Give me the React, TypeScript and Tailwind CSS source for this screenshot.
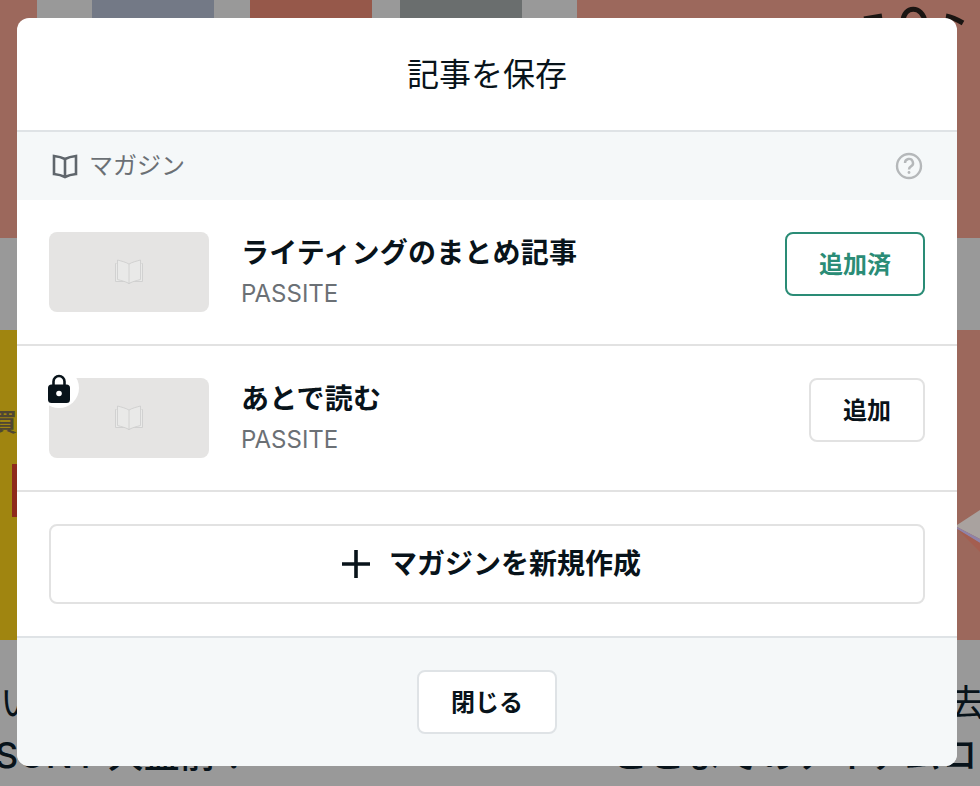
const font = { fontFamily: 'Inter, "Noto Sans CJK JP", sans-serif' }

function BookOutline() {
  return (
    <svg width="30" height="26" viewBox="0 0 30 26" fill="#e9e9e8" stroke="#cbcbcb" strokeWidth="0.8">
      <path d="M2.5 4.5 H1.5 V22.5 H12 L15 24.5 L18 22.5 H28.5 V4.5 H27.5" />
      <path d="M15 5 C11.5 3 7 2 3.5 1 V20.5 C7 21.5 11.5 22.5 15 24.5 C18.5 22.5 23 21.5 26.5 20.5 V1 C23 2 18.5 3 15 5 Z" />
      <path d="M15 5 V24.5" />
    </svg>
  )
}

function Thumb({ locked }: { locked?: boolean }) {
  return (
    <div className="relative w-40 h-20 rounded-lg bg-[#e5e4e3] flex items-center justify-center shrink-0">
      <BookOutline />
      {locked && (
        <div className="absolute -left-2.5 -top-2.5 w-10 h-10 rounded-full bg-white flex items-center justify-center">
          <svg width="22" height="29" viewBox="0 0 22 29">
            <path d="M5.5 12 V7.5 a5.5 5.5 0 0 1 11 0 V12" fill="none" stroke="#08131a" strokeWidth="2.6" />
            <rect x="0" y="10.5" width="22" height="18.5" rx="3.5" fill="#08131a" />
            <circle cx="11" cy="19.5" r="2.8" fill="#fff" />
          </svg>
        </div>
      )}
    </div>
  )
}

function Row({ title, locked, added }: { title: string; locked?: boolean; added?: boolean }) {
  return (
    <div className="flex items-center gap-8 h-[146px] px-8 border-b-2 border-[#e2e2e2]">
      <Thumb locked={locked} />
      <div className="flex-1 min-w-0">
        <p className="text-[28px] leading-[40px] font-bold tracking-[0.2px] text-[#08131a] translate-y-[1px]">{title}</p>
        <p className="text-[24px] leading-[40px] text-[#6b7075] translate-y-[2px]">PASSITE</p>
      </div>
      {added ? (
        <button className="w-[140px] h-16 self-start mt-8 pt-[2px] rounded-lg border-2 border-[#2a8c76] text-[#2a8c76] text-[24px] font-bold">追加済</button>
      ) : (
        <button className="w-[116px] h-16 self-start mt-8 pt-[2px] rounded-lg border-2 border-[#e2e2e2] text-[#08131a] text-[24px] font-bold">追加</button>
      )}
    </div>
  )
}

export default function App() {
  return (
    <div className="relative w-[980px] h-[786px] overflow-hidden bg-[#999999]" style={font}>
      {/* dimmed page behind */}
      <div className="relative h-[238px] bg-[#9c685c] flex pl-[37px]">
        <div className="w-[55px] h-[120px] bg-[#999999]" />
        <div className="w-[122px] h-[120px] bg-[#737986]" />
        <div className="w-[36px] h-[120px] bg-[#999999]" />
        <div className="w-[122px] h-[120px] bg-[#96584a]" />
        <div className="w-[28px] h-[120px] bg-[#999999]" />
        <div className="w-[122px] h-[120px] bg-[#6a6e6e]" />
        <div className="w-[55px] h-[120px] bg-[#999999]" />
        <svg className="absolute left-[860px] top-0" width="110" height="30" viewBox="0 0 110 30" fill="none" stroke="#1a1512" strokeWidth="5">
          <path d="M4 19 L22 16" />
          <path d="M43 22 C43 5 63 5 65 22" />
          <path d="M86 16 C92 17 98 20 103 23" />
        </svg>
      </div>
      <div className="h-[92px]" />
      <div className="h-[310px] flex">
        <div className="w-[490px] bg-[#a08510] pt-[81px]">
          <p className="text-[24px] leading-[24px] font-bold text-[#4f4634] -ml-[7px]">買</p>
          <div className="ml-3 mt-[29px] w-[6px] h-[53px] bg-[#8f2a1c]" />
        </div>
        <div className="relative flex-1 bg-[#9c685c]">
          <svg className="absolute right-0 top-[178px]" width="23" height="44" viewBox="0 0 23 44">
            <path d="M0 17 L23 2 V31 L0 19 Z" fill="#a9a29f" />
            <path d="M0 19 L23 31 V35 L0 21 Z" fill="#8f82a8" />
            <path d="M0 21 L23 35 V44 Z" fill="#a45e50" />
          </svg>
        </div>
      </div>
      <div className="flex justify-between pt-[37px] text-[36px] leading-[52px] text-[#08131a]">
        <div className="w-[300px]">
          <p>い</p>
          <p className="-ml-[5px] font-medium whitespace-nowrap">SONY 大盛前！</p>
        </div>
        <div className="w-[368px]">
          <p className="text-right -mr-[4px]">去</p>
          <p className="whitespace-nowrap font-medium tracking-[1px]">ここまでのアイテムコ</p>
        </div>
      </div>

      {/* modal */}
      <div className="absolute left-[17px] top-[18px] w-[940px] h-[748px] rounded-xl bg-white overflow-hidden flex flex-col">
        <div className="h-[114px] flex items-center justify-center border-b-2 border-[#dfe3e6]">
          <h2 className="text-[32px] leading-[40px] text-[#08131a] translate-y-[1px]">記事を保存</h2>
        </div>
        <div className="h-[68px] bg-[#f5f8f9] flex items-center justify-between pl-[35px] pr-[34px]">
          <div className="flex items-center gap-[11px] text-[24px] text-[#6b7075]">
            <svg width="26" height="26" viewBox="0 0 26 26" fill="none" stroke="#5f666c" strokeWidth="2.6">
              <path d="M2 3 C6 3.5 10 4.5 13 6 C16 4.5 20 3.5 24 3 V21 C20 21.5 16 22.5 13 24 C10 22.5 6 21.5 2 21 Z M13 6 V24" />
            </svg>
            <span>マガジン</span>
          </div>
          <svg width="28" height="28" viewBox="0 0 28 28" fill="none" stroke="#b5b8ba" strokeWidth="2.4">
            <circle cx="14" cy="14" r="12" />
            <path d="M10 11 a4 4 0 1 1 6 3.4 c-1.5 .9 -2 1.5 -2 3" />
            <circle cx="14" cy="20.5" r="1.4" fill="#b5b8ba" stroke="none" />
          </svg>
        </div>
        <Row title="ライティングのまとめ記事" added />
        <Row title="あとで読む" locked />
        <div className="h-[146px] px-8 pt-8 border-b-2 border-[#dfe3e6]">
          <button className="w-full h-20 pl-2 rounded-lg border-2 border-[#e2e2e2] flex items-center justify-center gap-[18px] text-[28px] font-bold text-[#08131a]">
            <svg width="30" height="30" viewBox="0 0 30 30" stroke="#08131a" strokeWidth="3.6">
              <path d="M15 1 V29 M1 15 H29" />
            </svg>
            マガジンを新規作成
          </button>
        </div>
        <div className="flex-1 bg-[#f5f8f9] flex justify-center pt-8">
          <button className="w-[140px] h-16 pt-[2px] rounded-lg border-2 border-[#dfe3e6] bg-white text-[24px] font-bold text-[#08131a]">閉じる</button>
        </div>
      </div>
    </div>
  )
}
